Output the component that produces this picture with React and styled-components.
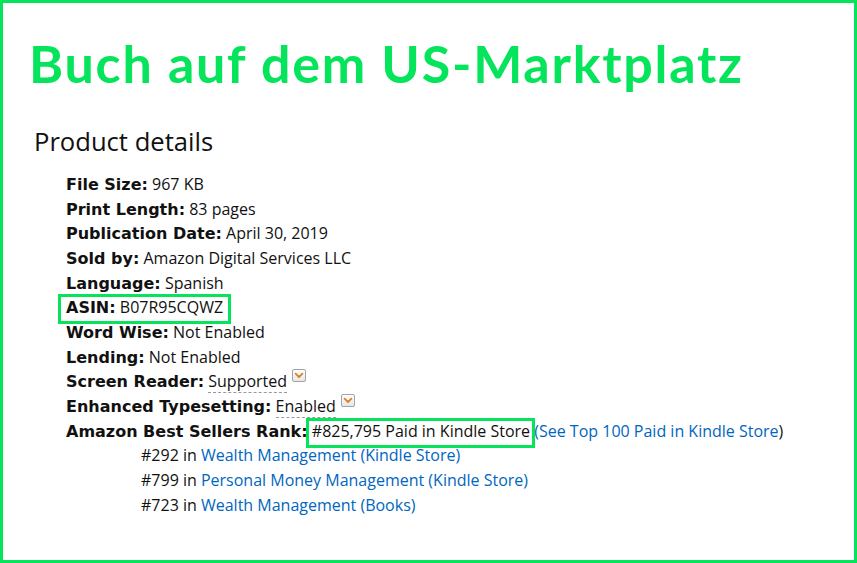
import React from "react";
import styled, { createGlobalStyle } from "styled-components";

const GREEN = "#06e45b";

const GlobalStyle = createGlobalStyle`
  html, body {
    margin: 0;
    padding: 0;
    background: #fff;
  }
  body {
    font-family: "Open Sans", "Noto Sans", sans-serif;
    color: #111;
  }
`;

const Frame = styled.div`
  width: 857px;
  height: 563px;
  box-sizing: border-box;
  border: 3px solid ${GREEN};
  padding: 0 0 0 26px;
  overflow: hidden;
`;

const Headline = styled.h1`
  margin: 34px 0 0 0;
  font-family: Lato, "Open Sans", sans-serif;
  font-weight: 700;
  font-size: 52px;
  line-height: 52px;
  letter-spacing: 1.75px;
  color: ${GREEN};
`;

const SectionTitle = styled.h2`
  margin: 39.6px 0 0 5px;
  font-family: "Open Sans", sans-serif;
  font-weight: 400;
  font-size: 25.6px;
  line-height: 25px;
  color: #111;
`;

const DetailList = styled.ul`
  list-style: none;
  margin: 18.6px 0 0 0;
  padding: 0 0 0 37px;
  font-size: 16px;
`;

const Row = styled.li`
  height: 24.65px;
  line-height: 24.65px;
  white-space: nowrap;
  padding-left: ${(p) => p.$indent || 0}px;
`;

const Label = styled.span`
  font-family: "DejaVu Sans", Verdana, sans-serif;
  font-weight: 700;
  color: #111;
`;

const Value = styled.span`
  font-family: "Open Sans", sans-serif;
  color: #111;
`;

const Link = styled.a`
  color: #0066c0;
  text-decoration: none;
  cursor: pointer;
`;

const Dotted = styled.span`
  border-bottom: 1px dashed #999;
`;

const Highlight = styled.span`
  position: relative;
  &::after {
    content: "";
    position: absolute;
    top: ${(p) => p.$top ?? -2}px;
    bottom: ${(p) => p.$bottom ?? -6}px;
    left: ${(p) => p.$left ?? -8}px;
    right: ${(p) => p.$right ?? -6}px;
    border: 3px solid ${GREEN};
    pointer-events: none;
  }
`;

const PopoverBox = styled.span`
  display: inline-block;
  width: 14px;
  height: 13px;
  margin-left: ${(p) => p.$gap ?? 5}px;
  vertical-align: 5px;
  line-height: 0;
  svg {
    display: block;
  }
`;

function Popover({ gap }) {
  return (
    <PopoverBox $gap={gap}>
      <svg width="14" height="13" viewBox="0 0 14 13">
        <defs>
          <linearGradient id="pg" x1="0" y1="0" x2="0" y2="1">
            <stop offset="0" stopColor="#ffffff" />
            <stop offset="1" stopColor="#e6e6e6" />
          </linearGradient>
        </defs>
        <rect x="0.5" y="0.5" width="13" height="12" rx="1.5" fill="url(#pg)" stroke="#a3a3a3" />
        <path d="M3.6 4.6 L7 8 L10.4 4.6" fill="none" stroke="#d9822b" strokeWidth="1.8" strokeLinecap="round" strokeLinejoin="round" />
      </svg>
    </PopoverBox>
  );
}

const details = [
  ["File Size:", "967 KB"],
  ["Print Length:", "83 pages"],
  ["Publication Date:", "April 30, 2019"],
  ["Sold by:", "Amazon Digital Services LLC"],
  ["Language:", "Spanish"],
];

const subRanks = [
  ["#292", "Wealth Management (Kindle Store)"],
  ["#799", "Personal Money Management (Kindle Store)"],
  ["#723", "Wealth Management (Books)"],
];

export default function App() {
  return (
    <>
      <GlobalStyle />
      <Frame>
        <Headline>Buch auf dem US-Marktplatz</Headline>
        <SectionTitle>Product details</SectionTitle>
        <DetailList>
          {details.map(([label, value]) => (
            <Row key={label}>
              <Label>{label}</Label> <Value>{value}</Value>
            </Row>
          ))}
          <Row>
            <Highlight $right={-8}>
              <Label>ASIN:</Label> <Value>B07R95CQWZ</Value>
            </Highlight>
          </Row>
          <Row>
            <Label>Word Wise:</Label> <Value>Not Enabled</Value>
          </Row>
          <Row>
            <Label>Lending:</Label> <Value>Not Enabled</Value>
          </Row>
          <Row>
            <Label>Screen Reader:</Label>{" "}
            <Value>
              <Dotted>Supported</Dotted>
            </Value>
            <Popover />
          </Row>
          <Row>
            <Label>Enhanced Typesetting:</Label>{" "}
            <Value>
              <Dotted>Enabled</Dotted>
            </Value>
            <Popover />
          </Row>
          <Row>
            <Label>Amazon Best Sellers Rank:</Label>{" "}
            <Value>
              <Highlight $left={-6} $right={-5}>
                #825,795 Paid in Kindle Store
              </Highlight>{" "}
              <Link>(See Top 100 Paid in Kindle Store</Link>)
            </Value>
          </Row>
          {subRanks.map(([rank, cat]) => (
            <Row key={cat} $indent={75}>
              <Value>
                {rank} in <Link>{cat}</Link>
              </Value>
            </Row>
          ))}
        </DetailList>
      </Frame>
    </>
  );
}
